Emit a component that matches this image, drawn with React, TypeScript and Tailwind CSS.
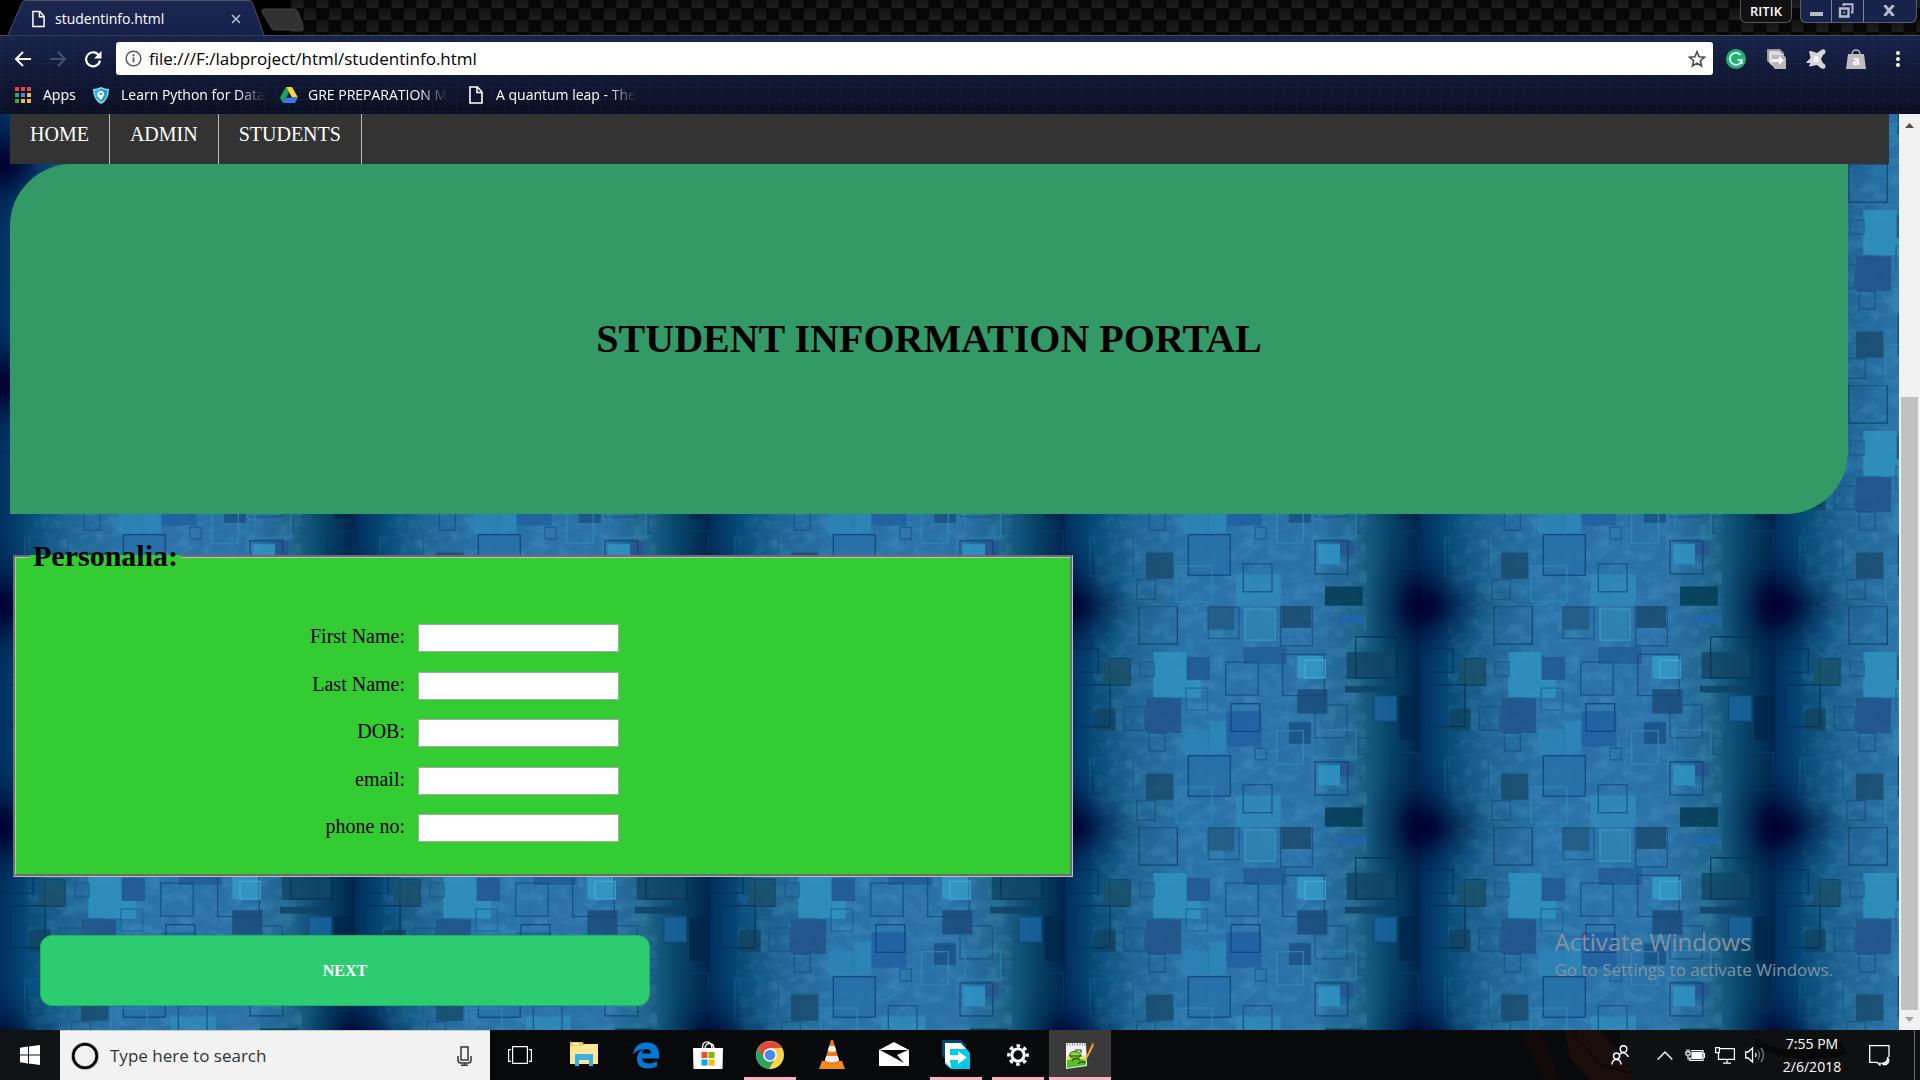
import React from "react";

type Box = [number, number, number, number, string];

const tileFills: Box[] = [
  [443, 314, 80, 70, "#205a80"],
  [665, 314, 88, 65, "#16496c"],
  [835, 343, 80, 22, "#1f66ac"],
  [550, 435, 130, 50, "#225a95"],
  [280, 450, 100, 133, "#2f93c0"],
  [380, 530, 42, 56, "#2f95c0"],
  [380, 465, 70, 68, "#1f5590"],
  [712, 462, 85, 65, "#369cc8"],
  [130, 475, 80, 75, "#1d5068"],
  [258, 587, 105, 103, "#1f5288"],
  [102, 618, 65, 65, "#14415f"],
  [500, 625, 105, 105, "#215fa0"],
  [712, 560, 90, 72, "#184a78"],
  [687, 658, 66, 64, "#1a4f80"],
  [860, 450, 145, 80, "#124464"],
  [855, 550, 130, 20, "#104060"],
  [942, 580, 68, 75, "#1c67a0"],
  [1018, 580, 62, 130, "#00284a"],
  [370, 680, 75, 72, "#2c84b8"],
  [448, 655, 50, 95, "#2c88b9"],
  [258, 810, 82, 77, "#1a4a6c"],
  [527, 875, 135, 92, "#2f8cba"],
  [775, 785, 65, 60, "#3096c6"],
  [840, 775, 42, 42, "#265490"],
  [795, 910, 113, 57, "#06374f"],
  [555, 325, 85, 88, "#2f86b2"],
  [385, 757, 126, 120, "#266fa8"],
];

const tileLines: Box[] = [
  [237, 314, 115, 113, "#12426a"],
  [445, 318, 92, 92, "#1b5680"],
  [555, 323, 90, 92, "#3fa0c8"],
  [662, 314, 95, 118, "#1a4e78"],
  [887, 405, 125, 122, "#06304f"],
  [497, 480, 98, 98, "#14508a"],
  [668, 457, 125, 122, "#16487a"],
  [735, 475, 60, 52, "#45b0d6"],
  [378, 557, 65, 65, "#1c639a"],
  [193, 613, 62, 68, "#184f80"],
  [513, 603, 86, 82, "#143f7c"],
  [765, 607, 97, 97, "#15527e"],
  [942, 580, 68, 75, "#104878"],
  [268, 690, 48, 54, "#184f84"],
  [385, 757, 126, 120, "#0f4272"],
  [650, 683, 80, 99, "#3389b8"],
  [765, 775, 98, 98, "#0f4272"],
  [550, 843, 86, 83, "#154c80"],
  [45, 547, 105, 124, "#003058"],
  [348, 850, 108, 105, "#3088b8"],
  [90, 765, 130, 115, "#14608c"],
  [780, 680, 108, 85, "#2c82ae"],
  [895, 705, 45, 48, "#15527e"],
  [240, 480, 42, 42, "#1c5888"],
  [585, 735, 34, 34, "#1a5890"],
  [995, 747, 80, 110, "#05406e"],
  [150, 470, 60, 78, "#123f5c"],
  [230, 890, 56, 58, "#185080"],
  [20, 440, 95, 70, "#06305a"],
];

function Backdrop() {
  return (
    <svg className="absolute inset-0 h-full w-full" aria-hidden="true">
      <defs>
        <linearGradient id="tileX" x1="0" x2="1" y1="0" y2="0">
          <stop offset="0" stopColor="#002e5e" />
          <stop offset=".08" stopColor="#064a78" />
          <stop offset=".2" stopColor="#1f6594" />
          <stop offset=".35" stopColor="#2972a8" />
          <stop offset=".7" stopColor="#2970a6" />
          <stop offset=".82" stopColor="#1f648c" />
          <stop offset=".91" stopColor="#08466a" />
          <stop offset="1" stopColor="#00244c" />
        </linearGradient>
        <radialGradient id="corner">
          <stop offset="0" stopColor="#000030" />
          <stop offset=".25" stopColor="#000636" stopOpacity=".85" />
          <stop offset=".6" stopColor="#00204c" stopOpacity=".4" />
          <stop offset="1" stopColor="#00305a" stopOpacity="0" />
        </radialGradient>
        <filter id="soft" x="0" y="0" width="1" height="1">
          <feGaussianBlur stdDeviation="1" />
        </filter>
        <filter id="mottle" x="0" y="0" width="1" height="1">
          <feTurbulence type="fractalNoise" baseFrequency=".02 .03" numOctaves="3" seed="4" />
          <feColorMatrix values="0 0 0 0 .22  0 0 0 0 .68  0 0 0 0 .86  2.600 0 0 0 -1.100" />
        </filter>
        <pattern id="tile" y="50" width="355" height="221" patternUnits="userSpaceOnUse" viewBox="15 314 1065 654" preserveAspectRatio="none">
          <rect x="15" y="314" width="1065" height="654" fill="url(#tileX)" />
          <rect x="100" y="314" width="820" height="654" filter="url(#mottle)" opacity=".15" />
          <g filter="url(#soft)">
            {tileFills.map(([x, y, w, h, c], i) => (
              <rect key={i} x={x} y={y} width={w} height={h} fill={c} opacity=".8" />
            ))}
            {tileLines.map(([x, y, w, h, c], i) => (
              <rect key={i} x={x} y={y} width={w} height={h} fill="none" stroke={c} strokeWidth="4" opacity=".8" />
            ))}
          </g>
          <ellipse cx="15" cy="314" rx="190" ry="200" fill="url(#corner)" />
          <ellipse cx="1080" cy="314" rx="160" ry="200" fill="url(#corner)" />
          <ellipse cx="15" cy="968" rx="190" ry="210" fill="url(#corner)" />
          <ellipse cx="1080" cy="968" rx="160" ry="210" fill="url(#corner)" />
          <ellipse cx="15" cy="314" rx="320" ry="90" fill="url(#corner)" opacity=".4" />
          <ellipse cx="15" cy="968" rx="320" ry="90" fill="url(#corner)" opacity=".4" />
        </pattern>
      </defs>
      <rect width="100%" height="100%" fill="url(#tile)" />
    </svg>
  );
}

function PageGlyph({ className }: { className: string }) {
  return (
    <svg viewBox="0 0 14 18" className={className} fill="none" stroke="#fff" strokeWidth="1.600" aria-hidden="true">
      <path d="M1 1h7.500l4.500 5v11H1z" />
      <path d="M8 1v5.500h5" />
    </svg>
  );
}

function TabStrip() {
  return (
    <header className="relative flex h-[36px] items-start bg-black">
      <svg className="absolute inset-0 h-full w-full" aria-hidden="true">
        <defs>
          <linearGradient id="fiber" x1="0" x2="0" y1="0" y2="1">
            <stop offset="0" stopColor="#111" />
            <stop offset="1" stopColor="#1f1f1f" />
          </linearGradient>
          <pattern id="carbon" x="4" y="8" width="25" height="24" patternUnits="userSpaceOnUse">
            <rect width="25" height="24" fill="#070707" />
            <rect width="12" height="12" fill="url(#fiber)" />
            <rect x="12.500" y="12" width="12" height="12" fill="url(#fiber)" />
          </pattern>
          <linearGradient id="tabFill" x1="0" x2="0" y1="0" y2="1">
            <stop offset="0" stopColor="#1c2750" />
            <stop offset="1" stopColor="#16204a" />
          </linearGradient>
        </defs>
        <rect x="290" width="100%" height="36" fill="url(#carbon)" />
        <path d="M0 35.500H4000" stroke="#4b4b4b" />
        <path d="M7.500 36L22 3Q23 .5 26 .5H256Q258.500 .5 259.500 3L264.500 36z" fill="none" />
        <path d="M7.500 36L22 3Q23 .5 26 .5H250Q252.500 .5 253.500 3L264.500 36z" fill="none" />
        <path d="M7.500 36L22 3Q23 .5 26 .5H257Q259 .5 260 3L264.500 36z" fill="none" />
        <path d="M7.500 36L22 3Q23 .5 26 .5H249Q251.500 .5 252.500 3L264.500 36z" fill="url(#tabFill)" stroke="#505260" />
        <path d="M265 9H294Q297 9 298 12L303 27Q304 30 300 30H275Q272 30 271 27L262 12Q261 9 265 9z" fill="#313131" stroke="#454545" />
      </svg>
      <div className="relative flex h-[37px] w-[265px] items-center pr-[21px] pl-8 text-white">
        <PageGlyph className="h-[18px] w-[13px]" />
        <span className="ml-[10px] flex-1 text-[14px] leading-5">studentinfo.html</span>
        <button aria-label="Close tab" className="flex h-4 w-4 items-center justify-center">
          <svg viewBox="0 0 10 10" className="h-[10px] w-[10px]" stroke="#b9bdc9" strokeWidth="1.600"><path d="M1 1l8 8M9 1L1 9" /></svg>
        </button>
      </div>
      <div className="relative ml-auto flex pr-[3px]">
        <button className="mr-2 h-[23px] w-[52px] rounded-b-md border border-t-0 border-[#555] bg-[#111] text-center text-[13px] leading-5 font-semibold text-white">RITIK</button>
        <div className="flex h-[23px] rounded-b-md border border-t-0 border-[#5b6070] bg-[#18234c]">
          <button aria-label="Minimize" className="flex w-[31px] items-end justify-center border-r border-[#7c8296] pb-[6px]">
            <span className="h-[4px] w-[13px] bg-[#b6bac6]" />
          </button>
          <button aria-label="Restore" className="flex w-[32px] items-center justify-center border-r border-[#7c8296] pr-[3px] pb-px">
            <svg viewBox="0 0 16 15" className="h-[15px] w-[16px]" fill="none" stroke="#b6bac6" strokeWidth="2"><path d="M5.500 3V1.200H14.500V9.500H13" /><path d="M2 5.500h8.500v8H2z" strokeWidth="2.400" /><path d="M5.500 9.500h1.600" /></svg>
          </button>
          <button aria-label="Close" className="flex w-[52px] items-center justify-center pr-[2px] pb-[2px]">
            <svg viewBox="0 0 12 11" className="h-[11px] w-[12px]" stroke="#b6bac6" strokeWidth="2.800"><path d="M1.500 0l9 11M10.500 0l-9 11" /></svg>
          </button>
        </div>
      </div>
    </header>
  );
}

function Toolbar() {
  return (
    <div className="relative h-[78px] bg-linear-to-b from-[#18234a] to-[#0a0f22]">
      <svg className="absolute inset-0 h-full w-full" aria-hidden="true">
        <defs>
          <pattern id="grid" width="12" height="12" patternUnits="userSpaceOnUse">
            <path d="M.5 0V12M0 3.500H12" stroke="#4b6bb0" strokeOpacity=".07" />
          </pattern>
        </defs>
        <rect width="100%" height="100%" fill="url(#grid)" />
      </svg>
      <div className="relative flex h-[45px] items-center pr-[14px] pl-[14px]">
        <button aria-label="Back" className="w-[18px]">
          <svg viewBox="0 0 18 16" className="h-4 w-[18px]" fill="none" stroke="#fff" strokeWidth="2"><path d="M17 8H2M9 1L2 8l7 7" /></svg>
        </button>
        <button aria-label="Forward" className="ml-[17px] w-[18px]">
          <svg viewBox="0 0 18 16" className="h-4 w-[18px]" fill="none" stroke="#47506f" strokeWidth="2"><path d="M1 8h15M9 1l7 7-7 7" /></svg>
        </button>
        <button aria-label="Reload" className="ml-[17px] w-[18px]">
          <svg viewBox="0 0 18 18" className="h-[18px] w-[18px]" fill="none" stroke="#fff" strokeWidth="2.200"><path d="M15 5.500A7 7 0 1 0 16 10.500" /><path d="M17.500 1v7.500H10z" fill="#fff" stroke="none" /></svg>
        </button>
        <div className="ml-[14px] flex h-[33px] flex-1 items-center rounded-[3px] bg-white pr-[7px] pl-[9px]">
          <svg viewBox="0 0 18 18" className="h-[17px] w-[17px]" fill="none" stroke="#5a5a5a" strokeWidth="1.600" aria-hidden="true"><circle cx="9" cy="9" r="7.800" /><path d="M9 8v5M9 4.500v2" strokeWidth="2" /></svg>
          <input aria-label="Address" defaultValue="file:///F:/labproject/html/studentinfo.html" className="ml-[7px] h-6 flex-1 bg-transparent text-[17px] leading-6 text-black outline-none" />
          <button aria-label="Bookmark this page">
            <svg viewBox="0 0 20 20" className="h-[18px] w-[18px]" fill="none" stroke="#4a4a4a" strokeWidth="1.800"><path d="M10 2l2.300 5.500 6 .5-4.600 3.900 1.400 5.800L10 14.600l-5.100 3.100 1.400-5.800L1.700 8l6-.5z" /></svg>
          </button>
        </div>
        <div className="ml-[13px] flex items-center gap-[20px]">
          <button aria-label="Grammar checker">
            <svg viewBox="0 0 20 20" className="h-5 w-5"><circle cx="10" cy="10" r="10" fill="#1fb472" /><path d="M14.500 6A6 6 0 1 0 15.800 11H11.500M15.800 11v4" fill="none" stroke="#fff" strokeWidth="1.700" /></svg>
          </button>
          <button aria-label="Share">
            <svg viewBox="0 0 20 20" className="h-5 w-5"><path d="M1 0h13l4 4v12H6l-5-4z" fill="#9c9c9c" /><path d="M5 5h12l3 4v11H9l-4-5z" fill="#b8b8b8" /><path d="M3 2h10l4 4H6v11l-3-4z" fill="#dcdcdc" /><path d="M6 10h7V7l5 4.500-5 4.500v-3H6z" fill="#fff" /></svg>
          </button>
          <button aria-label="Online security">
            <svg viewBox="0 0 20 20" className="h-5 w-5"><path d="M3.500 4Q2 2 5 2l6 2 5-3.500q3-.8 3.500 1.500T17 6l-2 4 2 4q3 1.500 2.500 4t-4 1.500L11 16l-7 1.500q-1.500 0-.5-1.500l1-2H1q-1.500-.5 0-1.500L4.500 9z" fill="#d6d6d6" /><text x="10" y="13" fontSize="10" fontWeight="700" textAnchor="middle" fill="#fff" fontFamily="Open Sans, sans-serif">a</text></svg>
          </button>
          <button aria-label="Shopping">
            <svg viewBox="0 0 20 20" className="h-5 w-5"><path d="M2 5h16l2 15H0z" fill="#bdbdbd" /><path d="M6 6Q6 1 10 1t4 5" fill="none" stroke="#bdbdbd" strokeWidth="1.300" /><text x="10" y="16" fontSize="12" fontWeight="700" textAnchor="middle" fill="#fff" fontFamily="Open Sans, sans-serif">a</text></svg>
          </button>
          <button aria-label="Menu" className="ml-1 w-4">
            <svg viewBox="0 0 16 18" className="mx-auto h-[18px] w-4" fill="#fff"><circle cx="8" cy="3" r="2" /><circle cx="8" cy="9" r="2" /><circle cx="8" cy="15" r="2" /></svg>
          </button>
        </div>
      </div>
      <nav aria-label="Bookmarks" className="relative flex h-[28px] items-center pl-[15px] text-[14px] leading-5 whitespace-nowrap text-white">
        <a href="#apps" className="flex w-[78px] items-center">
          <svg viewBox="0 0 16 16" className="h-4 w-4" aria-hidden="true">
            {["#e8453c", "#e8453c", "#e8453c", "#3aa757", "#4285f4", "#f9bb2d", "#3aa757", "#f9bb2d", "#f9bb2d"].map((c, i) => (
              <rect key={i} x={(i % 3) * 6} y={Math.floor(i / 3) * 6} width="4" height="4" fill={c} />
            ))}
          </svg>
          <span className="ml-3">Apps</span>
        </a>
        <a href="#python" className="flex w-[187px] items-center">
          <svg viewBox="0 0 16 17" className="h-[17px] w-4" aria-hidden="true"><path d="M8 0q4 2 8 2 0 11-8 15Q0 13 0 2q4 0 8-2z" fill="#8fdcf2" /><path d="M8 1.500q3 1.500 6.500 1.800 0 8.700-6.500 12z" fill="#1d9cc4" /><path d="M8 1.500Q5 3 1.500 3.300q0 8.700 6.500 12z" fill="#35b4d8" /><path d="M8 4a3 3 0 0 1 2.500 5L8 13 6 10.500A3.500 3.500 0 0 1 8 4z" fill="#fff" /><circle cx="8" cy="7" r="1.200" fill="#1d9cc4" /></svg>
          <span className="ml-3 mask-r-from-80%">Learn Python for Data</span>
        </a>
        <a href="#gre" className="flex w-[189px] items-center">
          <svg viewBox="0 0 18 16" className="h-4 w-[18px]" aria-hidden="true"><path d="M6 0h6l6 10.500h-6z" fill="#ffcf48" /><path d="M6 0l3 5.200L3 16 0 10.500z" fill="#11a861" /><path d="M6 10.500h12L15 16H3z" fill="#3777e3" /></svg>
          <span className="ml-[10px] mask-r-from-80%">GRE PREPARATION M</span>
        </a>
        <a href="#quantum" className="flex items-center">
          <PageGlyph className="h-[18px] w-[14px]" />
          <span className="ml-[13px] mask-r-from-80%">A quantum leap - The</span>
        </a>
      </nav>
    </div>
  );
}

const fields = ["First Name:", "Last Name:", "DOB:", "email:", "phone no:"];

function Portal() {
  return (
    <main className="relative flex flex-1 overflow-hidden font-['Liberation_Serif','Times_New_Roman',serif]">
      <div className="relative flex-1">
        <Backdrop />
        <div className="relative">
          <nav className="mx-[10px] flex h-[50px] bg-[#333333] text-[20px] leading-6 text-white">
            {["HOME", "ADMIN", "STUDENTS"].map((t) => (
              <a key={t} href={"#" + t.toLowerCase()} className="border-r border-[#bbbbbb] px-5 pt-2">{t}</a>
            ))}
          </nav>
          <section className="mr-[51px] ml-[10px] flex h-[350px] items-center justify-center rounded-tl-[62px] rounded-br-[62px] bg-[#339966]">
            <h1 className="text-[40px] leading-[46px] font-bold text-black">STUDENT INFORMATION PORTAL</h1>
          </section>
          <form onSubmit={(e) => e.preventDefault()}>
            <fieldset className="mt-[25px] ml-[13px] h-[338px] w-[1060px] max-w-full border-[3px] border-[#c0c0c0] bg-[#33cc33] pt-[51px] pl-[14px] [border-style:groove]">
              <legend className="px-[3px] text-[30px] leading-[34px] font-bold text-black">Personalia:</legend>
              <div className="grid h-[238px] grid-rows-5 text-[20px] text-black">
                {fields.map((f, i) => (
                  <div key={f} className="flex items-start">
                    <label htmlFor={"field" + i} className="w-[375px] text-right leading-6">{f}</label>
                    <input id={"field" + i} className="ml-[13px] h-[28px] w-[201px] border border-[#a9a9a9] bg-white px-1 text-[16px]" />
                  </div>
                ))}
              </div>
            </fieldset>
            <button className="mt-[58px] ml-10 block h-[71px] w-[610px] rounded-[12px] border border-[#27ae60] bg-[#2ecc71] text-[16px] leading-5 font-bold text-white">NEXT</button>
          </form>
        </div>
        <aside className="absolute right-[66px] bottom-[48px] font-['Open_Sans','Noto_Sans',sans-serif] text-[#8492a0]">
          <p className="text-[24px] leading-8">Activate Windows</p>
          <p className="text-[17px] leading-6">Go to Settings to activate Windows.</p>
        </aside>
      </div>
      <div className="flex w-[21px] flex-col items-center bg-[#f1f1f1]">
        <svg viewBox="0 0 9 5" className="mt-[9px] h-[5px] w-[9px]" fill="#505050" aria-hidden="true"><path d="M4.500 0L9 5H0z" /></svg>
        <div className="mt-[269px] w-[17px] flex-1 bg-[#c1c1c1]" />
        <svg viewBox="0 0 9 5" className="mt-[7px] mb-[8px] h-[5px] w-[9px]" fill="#a3a3a3" aria-hidden="true"><path d="M0 0h9L4.500 5z" /></svg>
      </div>
    </main>
  );
}

type App = { name: string; running?: boolean; active?: boolean; icon: React.ReactNode };

const apps: App[] = [
  {
    name: "File Explorer",
    icon: <svg viewBox="0 0 28 24" className="mb-[2px] h-6 w-7"><path d="M0 0h12l2 2h13v20H0z" fill="#f5cc45" /><path d="M0 4h13l2-2h13v20H0z" fill="#ffe694" /><path d="M3 1h6v2H3z" fill="#fff" /><path d="M5 24V12h18v12h-4v-6H9v6z" fill="#38b1e6" /></svg>,
  },
  {
    name: "Edge",
    icon: <svg viewBox="0 0 26 26" className="h-[27px] w-[26px]"><path d="M0 12Q2 0 13.500 0 26 0 26 13v3H9q.5 5 7 5 4 0 8-2.300v5Q20 26 15 26 4 26 4 16 4 10 10 7q-6 0-10 5zM9 11h9q0-4.500-4.500-4.500Q9.500 6.500 9 11z" fill="#0078d7" fillRule="evenodd" /></svg>,
  },
  {
    name: "Store",
    icon: <svg viewBox="0 0 30 28" className="h-7 w-[30px]"><path d="M9.500 8Q9 .8 14 .8T19 8M12 8q0-5.500 4.500-5.500T21 8" fill="none" stroke="#fff" strokeWidth="1.300" /><path d="M0 7h30l-.5 21H.5z" fill="#fff" /><path d="M8.500 11h6v6h-6z" fill="#f25022" /><path d="M15.500 11h6v6h-6z" fill="#7fba00" /><path d="M8.500 18.500h6v6h-6z" fill="#00a4ef" /><path d="M15.500 18.500h6v6h-6z" fill="#ffb900" /></svg>,
  },
  {
    name: "Chrome",
    running: true,
    icon: <svg viewBox="0 0 28 28" className="h-7 w-7"><circle cx="14" cy="14" r="14" fill="#fdd34a" /><path d="M14 14h-6L1.900 7A14 14 0 0 0 13 28l6-10z" fill="#2aa35c" /><path d="M14 7H26.100A14 14 0 0 0 2 7l6 10z" fill="#e0493c" /><circle cx="14" cy="14" r="6.800" fill="#fff" /><circle cx="14" cy="14" r="5.300" fill="#4a87ee" /></svg>,
  },
  {
    name: "VLC",
    icon: <svg viewBox="0 0 26 30" className="h-[30px] w-[26px]"><path d="M3 21h20l3 8H0z" fill="#f08a1d" /><path d="M12 0h2l6.500 22q-7.500 5-15 0z" fill="#f47d0c" /><path d="M10.300 6h5.400l1.700 5q-4.400 2-8.800 0zM7.200 16h11.600l1.500 4.500q-7.300 4-14.600 0z" fill="#eee" /></svg>,
  },
  {
    name: "Mail",
    icon: <svg viewBox="0 0 30 24" className="mb-[2px] h-6 w-[30px]"><path d="M0 8L15 0l15 8v16H0z" fill="#fff" /><path d="M1 8h28l-11 5 7 8z" fill="#090909" /></svg>,
  },
  {
    name: "SHAREit",
    running: true,
    icon: <svg viewBox="0 0 28 29" className="mb-px h-[29px] w-7"><path d="M0 0h19l5 5v15H5l-5-4z" fill="#00496f" /><path d="M5 7h18l5 6v16H9l-6-5V7z" fill="#00c8e8" /><path d="M3 3h16l5 6H8v14h1v5l-6-6z" fill="#fff" /><path d="M8 15h8v-4l9 6.500-9 6.500v-4H8z" fill="#fff" /></svg>,
  },
  {
    name: "Settings",
    running: true,
    icon: <svg viewBox="0 0 24 24" className="mb-px h-[22px] w-[22px]" fill="none" stroke="#fff"><circle cx="12" cy="12" r="6.700" strokeWidth="3.200" /><circle cx="12" cy="12" r="10" strokeWidth="3.600" strokeDasharray="3.927 3.927" strokeDashoffset="1.960" /></svg>,
  },
  {
    name: "Notepad++",
    running: true,
    active: true,
    icon: <svg viewBox="0 0 28 27" className="h-[27px] w-7"><path d="M0 1h20l1 23-21 3z" fill="#f2f4ee" /><path d="M1 17q9-3 19 1v5L1 26z" fill="#52c024" /><path d="M1 14q10-2 19 0v4q-10-2-19 0z" fill="#e4e36a" /><path d="M1 2.500h19" stroke="#8a8a8a" strokeWidth="2.400" strokeDasharray="1 1.500" /><ellipse cx="9" cy="13" rx="5.500" ry="3.500" fill="#8ddb35" stroke="#2b5c14" /><path d="M4 14h12M9 8h6v3M6 19q4-5 8-1M12 22q3-4 7-1" stroke="#1e3a10" strokeWidth="1.100" fill="none" /><path d="M19 19l1.500-5L26 2l2 1-6 12z" fill="#f4a823" /><path d="M26 0l2 1v2l-2-1z" fill="#b4532a" /></svg>,
  },
];

function Taskbar() {
  return (
    <footer className="relative flex h-[50px] bg-[#08090b] font-['Open_Sans','Noto_Sans',sans-serif] text-white">
      <div className="absolute inset-0 overflow-hidden">
        <svg viewBox="0 0 400 50" className="absolute top-0 right-0 h-[50px] w-[400px]" aria-hidden="true">
          <path d="M100 0h300v50H100z" fill="#0f1012" />
          <path d="M45 0h35l25 30 8 20H70L50 28z" fill="#1c0d0d" />
          <path d="M0 0h20l20 50H25z" fill="#120a0a" />
          <path d="M50 0l30 35 30 8" stroke="#060404" fill="none" />
          <path d="M235 8q35 22 85 4l8 12q-50 14-93-8z" fill="#060708" />
        </svg>
      </div>
      <button aria-label="Start" className="relative flex w-[60px] items-center justify-center bg-[#0f1316]">
        <svg viewBox="0 0 20 20" className="h-5 w-5" fill="#fff"><path d="M0 2.700L8 1.600V9.500H0zM9 1.500L20 0v9.500H9zM0 10.500h8v7.900L0 17.300zM9 10.500h11V20L9 18.500z" /></svg>
      </button>
      <label className="relative flex w-[430px] items-center border-t border-[#c8c8c8] bg-[#f2f2f2] pr-[18px] pl-[11px]">
        <svg viewBox="0 0 28 28" className="h-7 w-7" fill="none" aria-hidden="true"><circle cx="14" cy="14" r="12" stroke="#999" strokeWidth="3.600" /><circle cx="14" cy="14" r="11.800" stroke="#000" strokeWidth="2.600" /></svg>
        <input aria-label="Search" placeholder="Type here to search" className="ml-[11px] h-6 min-w-0 flex-1 bg-transparent text-[17px] leading-6 outline-none placeholder:text-[#333]" />
        <svg viewBox="0 0 15 20" className="h-5 w-[15px]" fill="none" stroke="#333" strokeWidth="1.500" aria-hidden="true"><path d="M4 1h7v13H4zM1 10v4q0 3 3 3h7q3 0 3-3v-4M7.500 17v2M4 19.200h7" /></svg>
      </label>
      <button aria-label="Task view" className="relative flex w-[63px] items-center justify-center pr-[3px]">
        <svg viewBox="0 0 24 18" className="h-[18px] w-6" fill="none" stroke="#fff" strokeWidth="1.200"><path d="M4.600 .6h14.800v16.800H4.600zM3 3.600H.6v11.800H3M21 3.600h2.400v11.800H21" /></svg>
      </button>
      {apps.map((a) => (
        <button
          key={a.name}
          aria-label={a.name}
          className={"relative flex w-[62px] items-center justify-center " + (a.active ? "bg-[#3a3a3b]" : "")}
        >
          {a.icon}
          {a.running && <span className={"absolute bottom-0 h-[3px] bg-[#ffb0bf] " + (a.active ? "inset-x-0" : "inset-x-[5px]")} />}
        </button>
      ))}
      <div className="relative ml-auto flex items-center">
        <button aria-label="People" className="mr-[28px]">
          <svg viewBox="0 0 18 20" className="h-5 w-[18px]" fill="none" stroke="#fff" strokeWidth="1.500"><circle cx="12.500" cy="4" r="3.300" /><path d="M8.500 9.500q4-4 8.500 1.500v1" /><circle cx="5.500" cy="11" r="3" /><path d="M.8 19.500q.7-5 4.700-5t4.700 5" /></svg>
        </button>
        <button aria-label="Show hidden icons" className="mr-[12px]">
          <svg viewBox="0 0 16 9" className="h-[9px] w-4" fill="none" stroke="#fff" strokeWidth="1.400"><path d="M.7 8.500L8 1l7.300 7.500" /></svg>
        </button>
        <button aria-label="Battery" className="mr-[10px]">
          <svg viewBox="0 0 20 14" className="h-[14px] w-5" fill="none" stroke="#fff" strokeWidth="1.200"><path d="M6 2.600h12v9.800H5V9M18 5.500h1.500v4H18" /><path d="M7 4.500h9.500v6H7z" fill="#fff" /><path d="M1 4h4v3H1zM2 4V1.500M4 4V1.500M3 7v4h2" /></svg>
        </button>
        <button aria-label="Network" className="mr-[10px]">
          <svg viewBox="0 0 20 17" className="h-[17px] w-5" fill="none" stroke="#fff" strokeWidth="1.200"><path d="M5 1.600h14.400v10.800H3.500V6M.6.600h3.800v5H.6zM12 12.400v3.500M8 16.200h8" /></svg>
        </button>
        <button aria-label="Volume" className="mr-[17px]">
          <svg viewBox="0 0 20 18" className="h-[18px] w-5" fill="none" strokeWidth="1.300"><path d="M.7 6h2.500L7.500 2v14L3.200 12H.7zM10.500 7q1.200 2 0 4" stroke="#fff" /><path d="M13 4.500q3 4.500 0 9M16 2q5 7 0 14" stroke="#777" /></svg>
        </button>
        <time className="mr-[27px] w-[60px] text-center text-[14px] leading-[23px] whitespace-nowrap"><span className="block">7:55 PM</span><span className="-mx-1 block">2/6/2018</span></time>
        <button aria-label="Notifications" className="mr-[24px]">
          <svg viewBox="0 0 21 21" className="h-[21px] w-[21px]" fill="none" stroke="#fff" strokeWidth="1.300"><path d="M20 12V.7H.7v16.600H8l3 3v-3" /><path d="M18.500 12q1 5-5.500 6.500 3 2.500 5.500 0t0-6.500z" fill="#ccc" /></svg>
        </button>
        <div className="mr-[5px] h-[50px] w-px bg-[#6a6a6a]" />
      </div>
    </footer>
  );
}

export default function App() {
  return (
    <div className="flex h-screen flex-col overflow-hidden font-['Open_Sans','Noto_Sans',sans-serif]">
      <TabStrip />
      <Toolbar />
      <Portal />
      <Taskbar />
    </div>
  );
}
